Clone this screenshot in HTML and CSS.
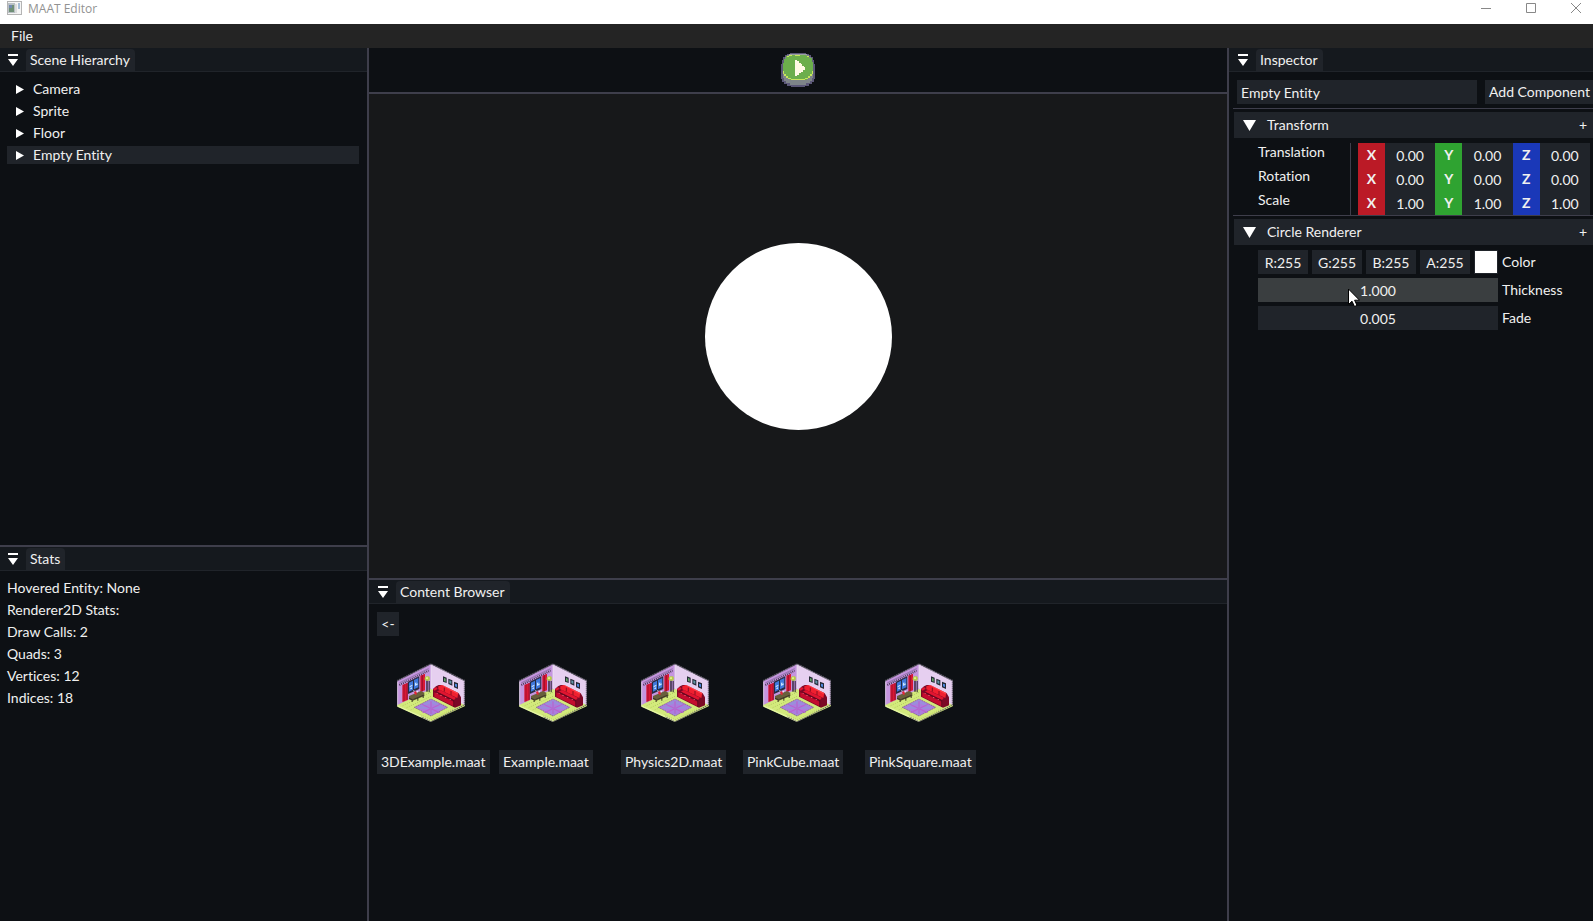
FILE: index.html
```html
<!DOCTYPE html>
<html lang="en">
<head>
<meta charset="utf-8">
<title>MAAT Editor</title>
<link rel="stylesheet" href="styles.css">
</head>
<body>
<svg class="defs" aria-hidden="true">
  <symbol id="room" viewBox="21 24 204 177">
    <path fill="#c595df" d="M123 27 22 78v74l101-48z"/>
    <path fill="#e6cff0" d="M123 27 224 78v74l-101-48z"/>
    <path fill="#d3ea7c" d="M123 102 22 150v4l101 46 101-46v-4z"/>
    <path fill="none" stroke="#a4bd52" stroke-width="2" stroke-dasharray="3 4" d="M38 152l85-40M50 158l73-34M62 165l16-7M92 179l31 15 70-34M110 176l13 7M30 154l90 42"/>
    <path fill="#e4f6a0" d="M22 150l101 46v5L22 155z"/>
    <path fill="none" stroke="#6f6a78" stroke-width="4" stroke-dasharray="4 2" d="M22 77 123 27l101 50"/>
    <path fill="none" stroke="#f0ecf4" stroke-width="2" d="M23 80v70M123 30v70"/>
    <path fill="none" stroke="#5b5365" stroke-width="3" stroke-dasharray="4 2" d="M223 80v70l-100 50-28-14"/>
    <path fill="none" stroke="#4c3c58" stroke-width="6" stroke-dasharray="3 3" d="M28 90l88-43"/>
    <path fill="#9a78b4" d="M28 82l88-43v4L28 86z"/>
    <path fill="#272b42" d="M54 80l34-16v38l-34 15z"/>
    <path fill="#3f78dc" d="M57 83l12-6v27l-12 6zM72 75l13-6v28l-13 6z"/>
    <path fill="#c8e4ff" d="M59 93l8-4v4l-8 4zM75 84l4-2v5l4-2v4l-8 4zM61 99l5-2v4l-5 2z"/>
    <path fill="#d81735" d="M37 90l16-7v52l-16 6zM91 62l14-6v50l-14 5z"/>
    <path fill="#8e0c2c" d="M41 89l2-1v51l-2 1zM50 85l3-1v50l-3 1zM95 61l3-1v49l-3 1z"/>
    <path fill="#26202e" d="M109 76h4v34h-4zM116 78h3v34h-3z"/>
    <path fill="#b6cc4c" d="M104 68l5-4h8l3 5-2 8h-10l-4-4z"/><path fill="#e2f08a" d="M108 67h6v5h-6z"/>
    <path fill="#69603c" d="M57 123l36-15 10 5v10l-35 14-11-5z"/><path fill="#3a3424" d="M57 128l11 5v8h-3v-6l-8-3zM70 132l31-13v10h-3v-6l-28 12zM82 129h3v8h-3z"/>
    <path fill="#e22836" d="M72 112l4-4 4 4v7h-5z"/><path fill="#eee" d="M80 108h4v4h-4zM70 106h3v3h-3z"/>
    <path fill="#b07adf" stroke="#6b5878" stroke-width="2" stroke-dasharray="4 2" d="M73 157l50-25 50 25-50 26z"/>
    <path fill="#9a8edc" d="M119 135h8v45h-8zM88 151l35-16 35 17-10 4-25-12-25 12zM83 156h80l-5 5H88z"/>
    <path fill="#b962cf" d="M121 139h4v38h-4zM96 146l54 26-4 2-54-26zM150 146l-54 26 4 2 54-26z"/>
    <path fill="#7c0826" d="M129 102l9-8 8-4h8l52 25 7 12v24l-18 7-66-33z"/>
    <path fill="#f02030" d="M145 94l10-4 50 25-3 14-57-26z"/>
    <path fill="#ff4048" d="M153 90l6 1 46 23-3 3z"/>
    <path fill="#e01530" d="M142 109l8-4 48 23-6 7-50-24zM129 103l9-7 5 5-9 6z"/>
    <path fill="#c40d2e" d="M133 112l58 28v14l-58-29z"/>
    <path fill="#ff7280" d="M140 114h3v2h-3zM151 120h4v2h-4zM165 127h4v2h-4zM179 133h4v2h-4z"/>
    <path fill="none" stroke="#520819" stroke-width="2" d="M163 98v12M183 108v12M142 112l49 24v20"/>
    <path fill="#252936" d="M159 64l11 4v16l-11-4zM175 71l12 5v16l-12-5zM192 80l12 5v17l-12-5z"/>
    <path fill="#65a868" d="M162 69l5 2v9l-5-2z"/><path fill="#6297a8" d="M178 76l6 2v9l-6-3z"/><path fill="#4e88de" d="M195 86l6 2v9l-6-3z"/>
  </symbol>
  <symbol id="dock" viewBox="0 0 12 12"><path fill="#fff" d="M1 0h10v2H1zM1 5h10l-5 7z"/></symbol>
  <symbol id="right" viewBox="0 0 8 9"><path fill="#fff" d="M0 0l8 4.500L0 9z"/></symbol>
  <symbol id="down" viewBox="0 0 13 11"><path fill="#fff" d="M0 0h13L6.500 11z"/></symbol>
</svg>
<div class="app">
  <header class="titlebar">
    <svg class="app-icon" viewBox="0 0 16 14" shape-rendering="crispEdges"><path fill="#b4b4b4" d="M0 0h16v14H0z"/><path fill="#f5f5f5" d="M1 1h14v12H1z"/><path fill="#b9c0c4" d="M1 2h7v10H1z"/><path fill="#6f8f76" d="M2 4h5v7H2z"/><path fill="#7189b0" d="M2 4h3v3H2z"/><path fill="#ddd" d="M9 3h2v9H9z"/><path fill="#a5bed6" d="M12 2h2v6h-2z"/></svg>
    <h1>MAAT Editor</h1>
    <div class="window-buttons">
      <button aria-label="Minimize"><svg viewBox="0 0 10 10"><path d="M0 5.500h10"/></svg></button>
      <button aria-label="Maximize"><svg viewBox="0 0 10 10"><path d="M.5.5h9v9h-9z"/></svg></button>
      <button aria-label="Close"><svg viewBox="0 0 10 10"><path d="M0 0l10 10M10 0L0 10"/></svg></button>
    </div>
  </header>
  <nav class="menubar"><button>File</button></nav>
  <main class="workspace">
    <div class="column left">
      <section class="panel">
        <div class="tabbar"><svg class="dock"><use href="#dock"/></svg><h2>Scene Hierarchy</h2></div>
        <div class="rows">
          <button class="node"><svg><use href="#right"/></svg>Camera</button>
          <button class="node"><svg><use href="#right"/></svg>Sprite</button>
          <button class="node"><svg><use href="#right"/></svg>Floor</button>
          <button class="node selected"><svg><use href="#right"/></svg>Empty Entity</button>
        </div>
      </section>
      <section class="panel">
        <div class="tabbar"><svg class="dock"><use href="#dock"/></svg><h2>Stats</h2></div>
        <div class="rows">
          <p>Hovered Entity: None</p>
          <p>Renderer2D Stats:</p>
          <p>Draw Calls: 2</p>
          <p>Quads: 3</p>
          <p>Vertices: 12</p>
          <p>Indices: 18</p>
        </div>
      </section>
    </div>
    <div class="column center">
      <div class="toolbar">
        <button aria-label="Play"><svg viewBox="0 0 34 34" shape-rendering="crispEdges">
          <path fill="#5c5878" d="M9 0h16v1h3v1h2v2h2v3h1v4h1v15h-1v3h-2v2h-3v2h-4v1H10v-1H6v-2H3v-2H1v-3H0V11h1V7h1V4h2V2h2V1h3z"/>
          <path fill="#7e8589" d="M9 1h16v1h3v2h2v3h1v4h1v14h-1v3h-2v2h-4v2H9v-2H5v-2H3v-3H2V11h1V7h1V4h2V2h3z"/>
          <path fill="#9ba1a2" d="M8 1h18v1H8zM3 7h1v5H3zM30 7h1v5h-1z"/>
          <path fill="#6cae4c" d="M9 2h16v1h3v2h3v4h1v11h-1v3h-2v2h-3v2H9v-2H6v-2H4v-3H2V10h1V6h2V3h4z"/>
          <path fill="#c7e45c" d="M8 2h3v1H8zM14 2h5v1h-5zM6 3h2v1H6zM26 3h2v1h-2zM2 18h1v3H2zM3 21h2v2H3zM5 23h2v2H5zM7 25h3v1H7zM10 26h14v1H10zM24 25h3v1h-3zM27 23h2v2h-2zM29 21h2v2h-2zM31 18h1v3h-1z"/>
          <path fill="#fff9e5" d="M14 7h2v1h2v2h2v1h1v2h2v1h1v3h-2v2h-2v1h-2v2h-2v1h-2z"/>
        </svg></button>
      </div>
      <div class="viewport"><div class="circle"></div></div>
      <section class="panel browser">
        <div class="tabbar"><svg class="dock"><use href="#dock"/></svg><h2>Content Browser</h2></div>
        <div class="files">
          <button class="field back">&lt;-</button>
          <div class="grid">
            <div class="file"><svg><use href="#room"/></svg><button class="field">3DExample.maat</button></div>
            <div class="file"><svg><use href="#room"/></svg><button class="field">Example.maat</button></div>
            <div class="file"><svg><use href="#room"/></svg><button class="field">Physics2D.maat</button></div>
            <div class="file"><svg><use href="#room"/></svg><button class="field">PinkCube.maat</button></div>
            <div class="file"><svg><use href="#room"/></svg><button class="field">PinkSquare.maat</button></div>
          </div>
        </div>
      </section>
    </div>
    <section class="panel inspector">
      <div class="tabbar"><svg class="dock"><use href="#dock"/></svg><h2>Inspector</h2></div>
      <div class="entity">
        <input class="field name" aria-label="Entity name" value="Empty Entity">
        <button class="field">Add Component</button>
      </div>
      <div class="component">
        <div class="component-head"><svg><use href="#down"/></svg><h3>Transform</h3><button aria-label="Transform options">+</button></div>
        <div class="vectors">
          <div class="vector"><span>Translation</span><div class="axes">
            <button class="x">X</button><input class="field" aria-label="Translation X" value="0.00"><button class="y">Y</button><input class="field" aria-label="Translation Y" value="0.00"><button class="z">Z</button><input class="field" aria-label="Translation Z" value="0.00"></div></div>
          <div class="vector"><span>Rotation</span><div class="axes">
            <button class="x">X</button><input class="field" aria-label="Rotation X" value="0.00"><button class="y">Y</button><input class="field" aria-label="Rotation Y" value="0.00"><button class="z">Z</button><input class="field" aria-label="Rotation Z" value="0.00"></div></div>
          <div class="vector"><span>Scale</span><div class="axes">
            <button class="x">X</button><input class="field" aria-label="Scale X" value="1.00"><button class="y">Y</button><input class="field" aria-label="Scale Y" value="1.00"><button class="z">Z</button><input class="field" aria-label="Scale Z" value="1.00"></div></div>
        </div>
      </div>
      <div class="component">
        <div class="component-head"><svg><use href="#down"/></svg><h3>Circle Renderer</h3><button aria-label="Circle Renderer options">+</button></div>
        <div class="props">
          <div class="prop"><div class="color">
            <input class="field" aria-label="Red" value="R:255"><input class="field" aria-label="Green" value="G:255"><input class="field" aria-label="Blue" value="B:255"><input class="field" aria-label="Alpha" value="A:255"><button class="swatch" id="color" aria-label="Pick color"></button></div><label for="color">Color</label></div>
          <div class="prop"><div class="drag"><input class="field hovered" id="thickness" value="1.000">
            <svg class="cursor" viewBox="0 0 12 19"><path fill="#fff" stroke="#000" d="M.5 1v15.500l3.500-3.300 2.500 5.300 2.500-1.100-2.400-5.200h4.900z"/></svg></div><label for="thickness">Thickness</label></div>
          <div class="prop"><input class="field" id="fade" value="0.005"><label for="fade">Fade</label></div>
        </div>
      </div>
    </section>
  </main>
</div>
</body>
</html>
```
FILE: styles.css
```css
:root {
  --bg: #0d1014;
  --bar: #15191e;
  --field: #20242a;
  --line: #3e3e4b;
  --text: #f0f0f0;
}
* { box-sizing: border-box; }
body {
  margin: 0;
  background: var(--bg);
  color: var(--text);
  font: 14px/18px Lato, "Open Sans", sans-serif;
  font-variant-ligatures: none;
}
h1, h2, h3, p { margin: 0; font-size: inherit; font-weight: 400; }
button, input { border: 0; border-radius: 0; padding: 0; margin: 0; background: none; color: inherit; font: inherit; font-variant-ligatures: none; }
svg { display: block; flex: none; }
.defs { position: absolute; width: 0; height: 0; }
.app { display: flex; flex-direction: column; height: 100vh; overflow: hidden; }

.titlebar { display: flex; align-items: flex-start; gap: 6px; height: 24px; padding: 0 0 0 7px; background: #fff; color: #929292; }
.titlebar h1 { flex: 1; font: 12px/18px "Open Sans", sans-serif; }
.app-icon { width: 15px; height: 14px; margin-top: 1px; }
.window-buttons { display: flex; }
.window-buttons button { display: grid; place-items: center; width: 45px; height: 16px; }
.window-buttons button:last-child { width: 35px; margin-left: 5px; }
.window-buttons svg { width: 10px; height: 10px; fill: none; stroke: #888; overflow: visible; }

.menubar { height: 24px; padding: 3px 11px; background: #242424; }

.workspace { flex: 1; min-height: 0; display: grid; grid-template-columns: 367px minmax(0, 1fr) 364px; column-gap: 2px; background: var(--line); }
.column { display: grid; min-height: 0; row-gap: 2px; }
.left { grid-template-rows: minmax(0, 1fr) 374px; }
.center { grid-template-rows: 44px minmax(0, 1fr) 341px; }
.panel { min-width: 0; background: var(--bg); overflow: hidden; }

.tabbar { display: flex; align-items: flex-end; gap: 7px; height: 24px; padding-left: 7px; background: var(--bar); border-bottom: 1px solid var(--field); }
.browser .tabbar, .inspector .tabbar { padding-left: 8px; }
.tabbar h2 { height: 22px; padding: 2px 5px 2px 4px; background: var(--field); border-radius: 4px 4px 0 0; }
.dock { width: 12px; height: 12px; margin-bottom: 5px; }

.rows { display: flex; flex-direction: column; gap: 4px; padding: 8px 8px 8px 7px; }
.node { display: flex; align-items: center; gap: 9px; height: 18px; padding-left: 9px; }
.node svg { width: 8px; height: 9px; }
.selected { background: var(--field); }

.toolbar { display: grid; place-items: center; background: var(--bg); }
.toolbar svg { width: 34px; height: 34px; }
.viewport { display: grid; place-items: center; background: #17181a; }
.circle { width: 187px; height: 187px; border-radius: 50%; background: #fff; }

.field { height: 24px; background: var(--field); text-align: center; white-space: nowrap; }
.files { padding: 8px; }
.back { width: 22px; }
.grid { display: grid; grid-template-columns: repeat(auto-fill, 114px); column-gap: 8px; margin-top: 27px; }
.file { display: flex; flex-direction: column; align-items: flex-start; gap: 28px; }
.file svg { width: 68px; height: 59px; margin-left: 20px; }
.file .field { padding: 0 4px; }

.entity { display: flex; gap: 8px; margin: 8px 0 4px 4px; padding-left: 4px; }
.entity .field { flex: none; padding: 0 4px; }
.entity .name { width: 240px; text-align: left; }
.component { margin-left: 4px; padding-top: 3px; border-top: 1px solid var(--line); }
.component-head { display: flex; align-items: center; height: 26px; margin-left: 1px; padding: 0 6px 0 9px; background: var(--field); }
.component-head svg { width: 13px; height: 11px; }
.component-head h3 { flex: 1; margin-left: 11px; }
.vectors { padding: 5px 3px 0 25px; }
.vector { display: flex; height: 24px; }
.vector span { width: 93px; border-right: 1px solid var(--line); }
.axes { flex: 1; display: grid; grid-template-columns: repeat(3, 27px minmax(0, 1fr)); margin-left: 7px; }
.axes .field { width: 100%; }
.axes button { font-weight: 700; }
.x { background: #bb1a26; }
.y { background: #2fa331; }
.z { background: #1a38b8; }
.props { display: flex; flex-direction: column; gap: 4px; padding: 5px 0 0 25px; }
.prop { display: flex; align-items: center; gap: 4px; }
.prop > .field, .drag, .color { width: 240px; }
.color { display: flex; gap: 4px; }
.color .field { width: 50px; }
.swatch { width: 24px; height: 24px; border: 1px solid var(--field); background: #fff; }
.drag { position: relative; }
.drag .field { display: block; width: 100%; }
.hovered { background: #3a3e40; }
.cursor { position: absolute; left: 90px; top: 10px; width: 12px; height: 19px; }
```
